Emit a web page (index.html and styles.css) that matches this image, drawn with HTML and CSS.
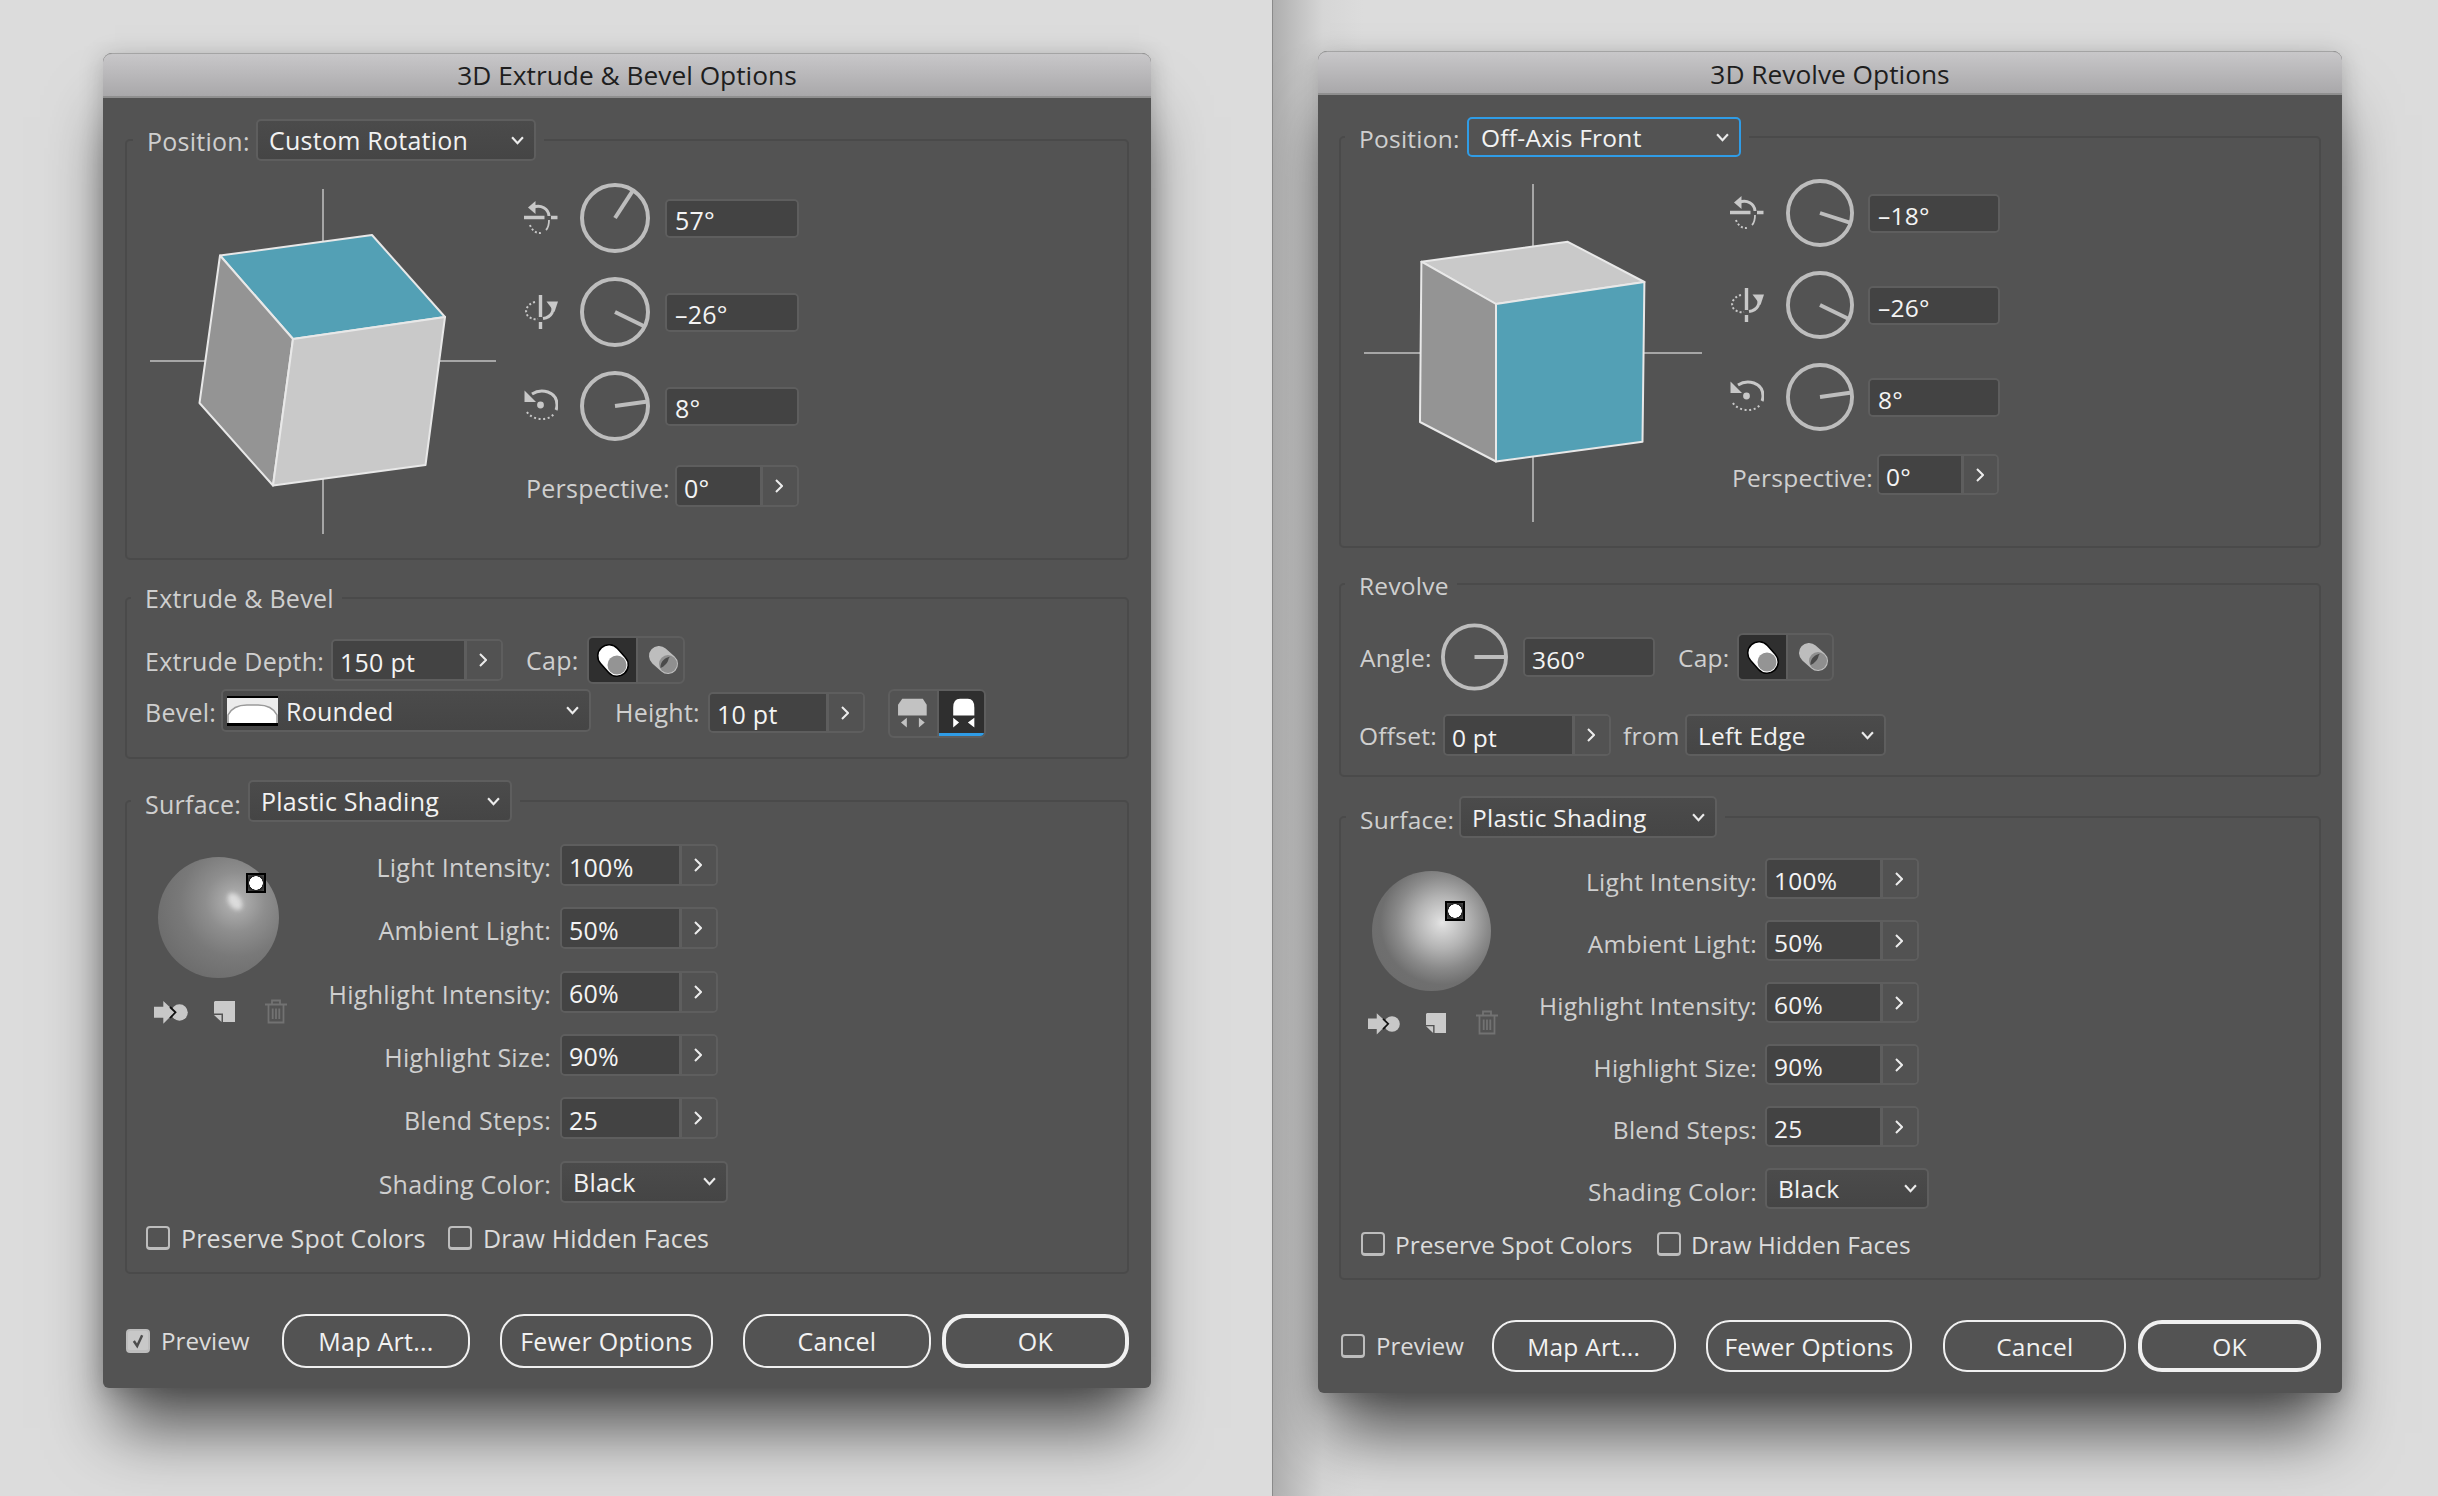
FILE: index.html
```html
<!DOCTYPE html>
<html lang="en">
<head>
<meta charset="utf-8">
<title>3D Options</title>
<link rel="stylesheet" href="styles.css">
</head>
<body>
<svg class="defs" aria-hidden="true">
  <symbol id="axis-x" viewBox="0 0 34 34">
    <path d="M0 16.500H20.500M27 16.500H33.500" fill="none" stroke="#c8c8c8" stroke-width="3.400"/>
    <path d="M9 6.500C17 3 24.500 8 25 15" fill="none" stroke="#c8c8c8" stroke-width="3"/>
    <path d="M4 6.500L11.500 0V13Z" fill="#c8c8c8"/>
    <path d="M25 19C25 24 24 27 22 29" fill="none" stroke="#c8c8c8" stroke-width="1.800"/>
    <path d="M6 24C8 30 14 34 19 31" fill="none" stroke="#c8c8c8" stroke-width="2" stroke-dasharray="2 2.200"/>
  </symbol>
  <symbol id="axis-y" viewBox="0 0 34 34">
    <path d="M16.500 0V22M16.500 27V34" fill="none" stroke="#c8c8c8" stroke-width="3.400"/>
    <path d="M27.500 9C31 15 28 22 19 23.500" fill="none" stroke="#c8c8c8" stroke-width="3"/>
    <path d="M22.500 6.500H34L30.500 17Z" fill="#c8c8c8"/>
    <path d="M11 7C3 9 -1 17 5 22C8 24 11 24.500 14 24" fill="none" stroke="#c8c8c8" stroke-width="2" stroke-dasharray="2 2.200"/>
  </symbol>
  <symbol id="axis-z" viewBox="0 0 34 34">
    <circle cx="16.500" cy="16" r="3.400" fill="#c8c8c8"/>
    <path d="M8 5C17 -1 33 2 33 16C33 18 32.500 20 32 21" fill="none" stroke="#c8c8c8" stroke-width="3"/>
    <path d="M0.500 1.500V13H12Z" fill="#c8c8c8"/>
    <path d="M3 23C8 31 23 33 30 25" fill="none" stroke="#c8c8c8" stroke-width="2" stroke-dasharray="2 2.600"/>
  </symbol>
  <symbol id="chev-right" viewBox="0 0 8 14">
    <path d="M1 1L7 7L1 13" fill="none" stroke="#ececec" stroke-width="2"/>
  </symbol>
  <symbol id="chev-down" viewBox="0 0 12 8">
    <path d="M1 1L6 6.500L11 1" fill="none" stroke="#ececec" stroke-width="2"/>
  </symbol>
  <symbol id="cap-on" viewBox="0 0 47 46">
    <path d="M20 18L28 27" stroke="#000" stroke-width="24" stroke-linecap="round"/>
    <path d="M20 18L28 27" stroke="#fff" stroke-width="21" stroke-linecap="round"/>
    <circle cx="28" cy="27" r="9.500" fill="#949494"/>
  </symbol>
  <symbol id="cap-off" viewBox="0 0 47 46">
    <path d="M21 18L30 26" stroke="#bdbdbd" stroke-width="20" stroke-linecap="round"/>
    <circle cx="30" cy="26" r="9" fill="#8f8f8f"/>
    <path d="M22.500 30C22 24 27 19 33 18.500C29 20 32 22 28 26C26 28 25 29 22.500 30Z" fill="#4a4a4a"/>
  </symbol>
  <symbol id="bevel-out" viewBox="0 0 47 47">
    <path d="M12 8H33L37 14V25H7.700V14Z" fill="#c2c2c2"/>
    <path d="M10.700 32.300L16.700 27.300V37.300ZM35 32.300L29 27.300V37.300Z" fill="#c2c2c2"/>
  </symbol>
  <symbol id="bevel-in" viewBox="0 0 47 47">
    <path d="M14 25V17Q14 8 21 8H29Q35.600 8 35.600 17V25Z" fill="#fff"/>
    <path d="M14 27.300V37.300L20 32.300ZM35.600 27.300V37.300L29 32.300Z" fill="#fff"/>
  </symbol>
  <symbol id="bevel-rounded" viewBox="0 0 51 30">
    <rect width="51" height="30" fill="#000"/>
    <rect y="2" width="51" height="26" fill="#ececec"/>
    <path d="M1 28V19Q6 9 20 9H31Q45 9 50 19V28Z" fill="#fff" stroke="#9a9a9a" stroke-width="1.500"/>
    <rect y="27" width="51" height="3" fill="#000"/>
  </symbol>
  <symbol id="ico-map" viewBox="0 0 34 23">
    <circle cx="25.500" cy="11.500" r="8.300" fill="#c8c8c8"/>
    <path d="M0 5.700H9.300V0L21 11L9.300 22.700V16.700H0Z" fill="#c8c8c8"/>
    <path d="M16 6L21.500 11.300L16 17" fill="none" stroke="#111" stroke-width="1.800"/>
  </symbol>
  <symbol id="ico-new" viewBox="0 0 21 21">
    <path d="M1 0H21V21H9V12.500H0V1Z" fill="#cacaca"/>
    <path d="M0 14H7.500V21Z" fill="#cacaca"/>
  </symbol>
  <symbol id="ico-trash" viewBox="0 0 22 25">
    <path d="M0 5.500H22M7 5V1.500H15V5M3.500 6V23.500H18.500V6M7.700 9.500V20M11 9.500V20M14.300 9.500V20" fill="none" stroke="#727272" stroke-width="1.800"/>
  </symbol>
  <symbol id="ico-check" viewBox="0 0 24 24">
    <path d="M7 12L11 18L17 5" fill="none" stroke="#4d4d4d" stroke-width="3"/>
  </symbol>
</svg>

<main class="desk">
  <div class="pane pane-left">
    <section class="dialog dialog-extrude">
      <header class="titlebar">3D Extrude &amp; Bevel Options</header>
      <div class="dialog-body">

        <div class="group pos-group">
          <div class="legend">
            <span class="label">Position:</span>
            <div class="select sel-pos"><span>Custom Rotation</span><svg class="chev"><use href="#chev-down"/></svg></div>
          </div>
          <div class="pos-body">
            <svg class="cube" viewBox="150 189 346 345">
              <path class="cross" d="M323 189V534M150 361H496"/>
              <polygon class="face-teal" points="220,255.500 372,235 445,317 293,339"/>
              <polygon class="face-mid" points="220,255.500 293,339 273,485.500 199.500,403"/>
              <polygon class="face-light" points="293,339 445,317 425.500,465 273,485.500"/>
            </svg>
            <div class="rotations">
              <div class="rot-row">
                <svg class="axis"><use href="#axis-x"/></svg>
                <svg class="dial" viewBox="0 0 70 70"><circle cx="35" cy="35" r="33"/><line x1="35" y1="35" x2="53" y2="7.300"/></svg>
                <div class="field f-rot"><span class="val">57°</span></div>
              </div>
              <div class="rot-row">
                <svg class="axis"><use href="#axis-y"/></svg>
                <svg class="dial" viewBox="0 0 70 70"><circle cx="35" cy="35" r="33"/><line x1="35" y1="35" x2="64.700" y2="49.500"/></svg>
                <div class="field f-rot"><span class="val">–26°</span></div>
              </div>
              <div class="rot-row">
                <svg class="axis"><use href="#axis-z"/></svg>
                <svg class="dial" viewBox="0 0 70 70"><circle cx="35" cy="35" r="33"/><line x1="35" y1="35" x2="67.700" y2="30.400"/></svg>
                <div class="field f-rot"><span class="val">8°</span></div>
              </div>
              <div class="persp-row">
                <span class="label">Perspective:</span>
                <div class="field f-persp"><span class="val">0°</span><span class="step"><svg class="chev-r"><use href="#chev-right"/></svg></span></div>
              </div>
            </div>
          </div>
        </div>

        <div class="group mid-group">
          <div class="legend legend-text"><span class="label">Extrude &amp; Bevel</span></div>
          <div class="row row-depth">
            <span class="label lab-depth">Extrude Depth:</span>
            <div class="field f-depth"><span class="val">150 pt</span><span class="step"><svg class="chev-r"><use href="#chev-right"/></svg></span></div>
            <span class="label cap-label">Cap:</span>
            <div class="toggle t-cap">
              <span class="cell on"><svg class="cell-ico"><use href="#cap-on"/></svg></span>
              <span class="cell"><svg class="cell-ico"><use href="#cap-off"/></svg></span>
            </div>
          </div>
          <div class="row row-bevel">
            <span class="label lab-bevel">Bevel:</span>
            <div class="select sel-bevel"><svg class="bevel-thumb"><use href="#bevel-rounded"/></svg><span>Rounded</span><svg class="chev"><use href="#chev-down"/></svg></div>
            <span class="label height-label">Height:</span>
            <div class="field f-height"><span class="val">10 pt</span><span class="step"><svg class="chev-r"><use href="#chev-right"/></svg></span></div>
            <div class="toggle t-bevel">
              <span class="cell"><svg class="cell-ico"><use href="#bevel-out"/></svg></span>
              <span class="cell on underlined"><svg class="cell-ico"><use href="#bevel-in"/></svg></span>
            </div>
          </div>
        </div>

        <div class="group surf-group">
          <div class="legend">
            <span class="label">Surface:</span>
            <div class="select sel-surf"><span>Plastic Shading</span><svg class="chev"><use href="#chev-down"/></svg></div>
          </div>
          <div class="surf-body">
            <div class="light-col">
              <div class="sphere"><span class="spot"></span><span class="handle"></span></div>
              <div class="light-tools">
                <svg class="ico-map"><use href="#ico-map"/></svg>
                <svg class="ico-new"><use href="#ico-new"/></svg>
                <svg class="ico-trash"><use href="#ico-trash"/></svg>
              </div>
            </div>
            <div class="surf-grid">
              <span class="label">Light Intensity:</span>
              <div class="field f-surf"><span class="val">100%</span><span class="step"><svg class="chev-r"><use href="#chev-right"/></svg></span></div>
              <span class="label">Ambient Light:</span>
              <div class="field f-surf"><span class="val">50%</span><span class="step"><svg class="chev-r"><use href="#chev-right"/></svg></span></div>
              <span class="label">Highlight Intensity:</span>
              <div class="field f-surf"><span class="val">60%</span><span class="step"><svg class="chev-r"><use href="#chev-right"/></svg></span></div>
              <span class="label">Highlight Size:</span>
              <div class="field f-surf"><span class="val">90%</span><span class="step"><svg class="chev-r"><use href="#chev-right"/></svg></span></div>
              <span class="label">Blend Steps:</span>
              <div class="field f-surf"><span class="val">25</span><span class="step"><svg class="chev-r"><use href="#chev-right"/></svg></span></div>
              <span class="label">Shading Color:</span>
              <div class="select sel-shade"><span>Black</span><svg class="chev"><use href="#chev-down"/></svg></div>
            </div>
          </div>
          <div class="checks">
            <span class="check"></span><span class="label lab-spot">Preserve Spot Colors</span>
            <span class="check second"></span><span class="label">Draw Hidden Faces</span>
          </div>
        </div>

        <footer class="footer">
          <div class="preview"><span class="check checked"><svg class="tick"><use href="#ico-check"/></svg></span><span class="label">Preview</span></div>
          <button class="btn b-map">Map Art...</button>
          <button class="btn b-fewer">Fewer Options</button>
          <button class="btn b-cancel">Cancel</button>
          <button class="btn b-ok">OK</button>
        </footer>
      </div>
    </section>
  </div>

  <div class="pane pane-right">
    <section class="dialog dialog-revolve">
      <header class="titlebar">3D Revolve Options</header>
      <div class="dialog-body">

        <div class="group pos-group">
          <div class="legend">
            <span class="label">Position:</span>
            <div class="select sel-pos focused"><span>Off-Axis Front</span><svg class="chev"><use href="#chev-down"/></svg></div>
          </div>
          <div class="pos-body">
            <svg class="cube" viewBox="1364 184 338 338">
              <path class="cross" d="M1533 184V522M1364 353H1702"/>
              <polygon class="face-light" points="1421.400,261.700 1567.800,241.800 1644.400,282 1496,304"/>
              <polygon class="face-mid" points="1421.400,261.700 1496,304 1496,461.500 1420,422"/>
              <polygon class="face-teal" points="1496,304 1644.400,282 1642.500,441.800 1496,461.500"/>
            </svg>
            <div class="rotations">
              <div class="rot-row">
                <svg class="axis"><use href="#axis-x"/></svg>
                <svg class="dial" viewBox="0 0 70 70"><circle cx="35" cy="35" r="33"/><line x1="35" y1="35" x2="66.400" y2="45.200"/></svg>
                <div class="field f-rot"><span class="val">–18°</span></div>
              </div>
              <div class="rot-row">
                <svg class="axis"><use href="#axis-y"/></svg>
                <svg class="dial" viewBox="0 0 70 70"><circle cx="35" cy="35" r="33"/><line x1="35" y1="35" x2="64.700" y2="49.500"/></svg>
                <div class="field f-rot"><span class="val">–26°</span></div>
              </div>
              <div class="rot-row">
                <svg class="axis"><use href="#axis-z"/></svg>
                <svg class="dial" viewBox="0 0 70 70"><circle cx="35" cy="35" r="33"/><line x1="35" y1="35" x2="67.700" y2="30.400"/></svg>
                <div class="field f-rot"><span class="val">8°</span></div>
              </div>
              <div class="persp-row">
                <span class="label">Perspective:</span>
                <div class="field f-persp"><span class="val">0°</span><span class="step"><svg class="chev-r"><use href="#chev-right"/></svg></span></div>
              </div>
            </div>
          </div>
        </div>

        <div class="group mid-group">
          <div class="legend legend-text"><span class="label">Revolve</span></div>
          <div class="row row-angle">
            <span class="label lab-angle">Angle:</span>
            <svg class="dial" viewBox="0 0 70 70"><circle cx="35" cy="35" r="33"/><line x1="35" y1="35" x2="68" y2="35"/></svg>
            <div class="field f-angle"><span class="val">360°</span></div>
            <span class="label cap-label">Cap:</span>
            <div class="toggle t-cap">
              <span class="cell on"><svg class="cell-ico"><use href="#cap-on"/></svg></span>
              <span class="cell"><svg class="cell-ico"><use href="#cap-off"/></svg></span>
            </div>
          </div>
          <div class="row row-offset">
            <span class="label lab-offset">Offset:</span>
            <div class="field f-offset"><span class="val">0 pt</span><span class="step"><svg class="chev-r"><use href="#chev-right"/></svg></span></div>
            <span class="label from-label">from</span>
            <div class="select sel-from"><span>Left Edge</span><svg class="chev"><use href="#chev-down"/></svg></div>
          </div>
        </div>

        <div class="group surf-group">
          <div class="legend">
            <span class="label">Surface:</span>
            <div class="select sel-surf"><span>Plastic Shading</span><svg class="chev"><use href="#chev-down"/></svg></div>
          </div>
          <div class="surf-body">
            <div class="light-col">
              <div class="sphere"><span class="handle"></span></div>
              <div class="light-tools">
                <svg class="ico-map"><use href="#ico-map"/></svg>
                <svg class="ico-new"><use href="#ico-new"/></svg>
                <svg class="ico-trash"><use href="#ico-trash"/></svg>
              </div>
            </div>
            <div class="surf-grid">
              <span class="label">Light Intensity:</span>
              <div class="field f-surf"><span class="val">100%</span><span class="step"><svg class="chev-r"><use href="#chev-right"/></svg></span></div>
              <span class="label">Ambient Light:</span>
              <div class="field f-surf"><span class="val">50%</span><span class="step"><svg class="chev-r"><use href="#chev-right"/></svg></span></div>
              <span class="label">Highlight Intensity:</span>
              <div class="field f-surf"><span class="val">60%</span><span class="step"><svg class="chev-r"><use href="#chev-right"/></svg></span></div>
              <span class="label">Highlight Size:</span>
              <div class="field f-surf"><span class="val">90%</span><span class="step"><svg class="chev-r"><use href="#chev-right"/></svg></span></div>
              <span class="label">Blend Steps:</span>
              <div class="field f-surf"><span class="val">25</span><span class="step"><svg class="chev-r"><use href="#chev-right"/></svg></span></div>
              <span class="label">Shading Color:</span>
              <div class="select sel-shade"><span>Black</span><svg class="chev"><use href="#chev-down"/></svg></div>
            </div>
          </div>
          <div class="checks">
            <span class="check"></span><span class="label lab-spot">Preserve Spot Colors</span>
            <span class="check second"></span><span class="label">Draw Hidden Faces</span>
          </div>
        </div>

        <footer class="footer">
          <div class="preview"><span class="check"></span><span class="label">Preview</span></div>
          <button class="btn b-map">Map Art...</button>
          <button class="btn b-fewer">Fewer Options</button>
          <button class="btn b-cancel">Cancel</button>
          <button class="btn b-ok">OK</button>
        </footer>
      </div>
    </section>
  </div>
</main>
</body>
</html>
```
FILE: styles.css
```css
* { box-sizing: border-box; }
html, body { margin: 0; height: 100%; }
body { background: #dcdcdc; font-family: "Open Sans", "Noto Sans", sans-serif; overflow: hidden; }
.defs { position: absolute; width: 0; height: 0; }
svg { display: block; flex: none; }

.desk { display: flex; width: 2438px; height: 1496px; }
.pane { position: relative; overflow: hidden; height: 100%; background: #dcdcdc; }
.pane-left { width: 1272px; }
.pane-right { width: 1166px; border-left: 1px solid #8a8a8a; background: linear-gradient(90deg, #aeaeae, #d6d6d6 50px, #dcdcdc 90px); }

.dialog { position: absolute; background: #535353; border-radius: 9px 9px 6px 6px; box-shadow: 0 52px 62px -12px rgba(0,0,0,.62), 0 4px 24px rgba(0,0,0,.22); }
.dialog-extrude { left: 103px; top: 53px; width: 1048px; --fs: 25px; }
.dialog-revolve { left: 45px; top: 51px; width: 1024px; --fs: 24.500px; }

.titlebar { height: 45px; display: flex; align-items: center; justify-content: center; border-radius: 9px 9px 0 0; border-top: 1px solid #a4a4a4; border-bottom: 2px solid #8f8f8f; background: linear-gradient(#c8c7c9, #a9a8aa); color: #1e1e1e; font-size: 26.300px; }
.dialog-revolve .titlebar { height: 44px; padding-top: 2px; }
.dialog-body { padding: 0 22px 20px; font-size: var(--fs); letter-spacing: .25px; }
.dialog-revolve .dialog-body { padding: 0 21px 21px; }

.group { border: 2px solid #4a4a4a; border-radius: 5px; }
.label { color: #cfcfcf; white-space: nowrap; }
.legend { display: flex; align-items: center; width: fit-content; background: #535353; height: 42px; margin: -22px 0 0 4px; padding: 0 8px 0 14px; }
.legend-text { height: 30px; padding-bottom: 2px; }
.pos-group .legend { margin-left: 6px; }
.pos-group .legend .label { width: 100px; padding-top: 2px; }
.surf-group .legend .label { width: 93px; padding-top: 5px; }

.select { display: flex; align-items: center; justify-content: space-between; height: 42px; padding: 0 10px 0 11px; border: 2px solid #5e5e5e; border-radius: 5px; background: linear-gradient(#4b4b4b, #454545); color: #f2f2f2; white-space: nowrap; }
.select.focused { border-color: #2f9ce6; background: #535353; }
.chev { width: 13px; height: 9px; }
.field { display: flex; height: 42px; border: 2px solid #5e5e5e; border-radius: 5px; overflow: hidden; color: #f4f4f4; white-space: nowrap; }
.val { flex: 1; display: flex; align-items: center; padding: 3px 0 0 7px; background: #434343; }
.f-rot .val { padding-left: 8px; }
.step { flex: none; width: 37px; display: flex; align-items: center; justify-content: center; padding-right: 2px; border-left: 3px solid #5e5e5e; background: #525252; }
.chev-r { width: 8px; height: 14px; }

/* position group */
.pos-group { height: 421px; margin-top: 41px; }
.pos-body { display: flex; align-items: flex-start; }
.cube { width: 346px; height: 345px; margin: 28px 28px 0 23px; }
.cross { stroke: #a6a6a6; stroke-width: 2; fill: none; }
.cube polygon { stroke: #e8e8e8; stroke-width: 2; stroke-linejoin: round; }
.face-teal { fill: #53a0b5; }
.face-mid { fill: #949494; }
.face-light { fill: #c9c9c9; }
.rotations { display: flex; flex-direction: column; gap: 24px; margin-top: 22px; }
.rot-row { display: flex; align-items: center; }
.axis { width: 34px; height: 34px; margin-right: 22px; }
.dial { width: 70px; height: 70px; }
.dial circle { fill: none; stroke: #bdbdbd; stroke-width: 4; }
.dial line { stroke: #bdbdbd; stroke-width: 4; }
.f-rot { width: 134px; height: 39px; margin-left: 15px; }
.persp-row { display: flex; align-items: center; gap: 9px; margin-left: 2px; }
.persp-row .label { width: 140px; padding-top: 3px; }
.f-persp { width: 124px; }
.sel-pos { width: 280px; margin-left: 9px; }

/* middle group */
.mid-group { height: 162px; margin-top: 37px; }
.mid-group .legend { margin-top: -15px; }
.row { display: flex; align-items: center; padding-left: 18px; }
.row-depth { height: 48px; margin-top: 22px; }
.lab-depth { width: 177px; padding-top: 2px; }
.f-depth { width: 172px; margin-left: 9px; }
.cap-label { width: 52px; margin-left: 23px; }
.toggle { display: flex; border: 2px solid #5e5e5e; border-radius: 6px; overflow: hidden; }
.cell { flex: 1; display: block; position: relative; }
.cell.on { background: #2f2f2f; }
.cell + .cell { border-left: 2px solid #5e5e5e; }
.cell-ico { width: 47px; height: 46px; }
.t-cap { width: 98px; height: 48px; margin-left: 9px; }
.row-bevel { height: 49px; margin-top: 5px; align-items: flex-start; }
.row-bevel .label { line-height: 46px; }
.lab-bevel { width: 68px; }
.sel-bevel { width: 370px; height: 43px; margin-left: 8px; padding-left: 4px; }
.sel-bevel span { flex: 1; padding-left: 8px; }
.bevel-thumb { width: 51px; height: 30px; }
.height-label { width: 85px; margin-left: 24px; }
.f-height { width: 157px; height: 41px; margin: 3px 0 0 8px; }
.t-bevel { width: 98px; height: 49px; margin-left: 23px; }
.underlined::after { content: ""; position: absolute; left: 0; right: 2px; bottom: 0; height: 3px; background: #2f9ce6; }

/* surface group */
.surf-group { height: 474px; margin-top: 41px; }
.sel-surf { width: 264px; margin-left: 10px; }
.surf-body { display: flex; align-items: flex-start; }
.light-col { width: 133px; margin: 35px 33px 0 27px; }
.sphere { position: relative; width: 121px; height: 121px; margin-left: 4px; border-radius: 50%; background: radial-gradient(circle at 64% 37%, #b4b4b4 0, #a6a6a6 12px, #8e8e8e 30px, #797979 55px, #6c6c6c 85px, #686868 100%); }
.spot { position: absolute; left: 71px; top: 35px; width: 12px; height: 19px; border-radius: 50%; background: #dcdcdc; filter: blur(2px); transform: rotate(-35deg); }
.handle { position: absolute; left: 88px; top: 16px; width: 20px; height: 20px; border: 2px solid #000; background: radial-gradient(circle, #fff 0, #fff 6.500px, #222 7px, #555 100%); }
.light-tools { display: flex; align-items: flex-end; margin-top: 21px; }
.ico-map { width: 34px; height: 23px; }
.ico-new { width: 21px; height: 21px; margin: 0 30px 2px 26px; }
.ico-trash { width: 22px; height: 25px; }
.surf-grid { display: grid; grid-template-columns: 231px auto; column-gap: 9px; row-gap: 21.330px; margin-top: 22px; align-items: center; justify-items: start; }
.surf-grid .label { justify-self: end; padding-top: 4px; }
.f-surf { width: 158px; }
.sel-shade { width: 168px; }
.checks { display: flex; align-items: center; height: 24px; margin: 23px 0 0 19px; letter-spacing: .12px; }
.checks .label, .preview .label { color: #dcdcdc; }
.lab-spot { width: 242px; }
.check { flex: none; display: block; width: 24px; height: 24px; margin-right: 11px; border: 2px solid #bdbdbd; border-bottom-width: 3px; border-radius: 4px; }
.check.second { margin-left: 25px; }
.check.checked { background: #c8c8c8; }
.tick { width: 20px; height: 20px; }

/* footer */
.footer { display: flex; align-items: center; margin-top: 40px; }
.preview { display: flex; align-items: center; width: 157px; padding-left: 1px; font-size: 24.200px; letter-spacing: 0; }
.preview .label { margin-top: -2px; }
.btn { height: 54px; margin: 0 0 0 30px; padding: 0; border: 2px solid #f0f0f0; border-radius: 24px; background: none; color: #f2f2f2; font: inherit; letter-spacing: inherit; }
.preview + .btn { margin-left: 0; }
.b-map { width: 188px; }
.b-fewer { width: 213px; }
.b-cancel { width: 188px; }
.b-ok { width: 187px; margin-left: 11px; border-width: 4px; }

/* revolve dialog */
.dialog-revolve .pos-group { height: 412px; margin-top: 41px; }
.dialog-revolve .pos-group .legend { height: 40px; margin: -21px 0 0 4px; }
.dialog-revolve .sel-pos { width: 274px; height: 40px; margin-left: 8px; padding-left: 12px; }
.dialog-revolve .cube { width: 338px; height: 338px; margin: 27px 28px 0 23px; }
.dialog-revolve .rotations { gap: 24px; margin-top: 22px; }
.dialog-revolve .rot-row .dial { width: 68px; height: 68px; }
.dialog-revolve .f-rot { width: 132px; margin-left: 14px; }
.dialog-revolve .val { padding-top: 4px; }
.dialog-revolve .persp-row { gap: 9px; margin-top: -1px; }
.dialog-revolve .persp-row .label { width: 136px; padding-top: 5px; }
.dialog-revolve .f-persp { width: 122px; height: 41px; }
.dialog-revolve .f-persp .step { width: 36px; }
.dialog-revolve .mid-group { height: 194px; margin-top: 35px; }
.dialog-revolve .mid-group .legend { margin-top: -14px; }
.row-angle { height: 68px; margin-top: 22px; padding-left: 19px; }
.lab-angle { width: 72px; }
.row-angle .dial { width: 67px; height: 68px; margin-left: 9px; }
.f-angle { width: 132px; height: 40px; margin-left: 15px; }
.dialog-revolve .cap-label { width: 50px; }
.dialog-revolve .t-cap { width: 97px; }
.row-offset { height: 42px; margin-top: 23px; }
.lab-offset { width: 75px; }
.f-offset { width: 168px; margin-left: 9px; }
.from-label { width: 54px; margin-left: 12px; }
.sel-from { width: 201px; margin-left: 8px; }
.dialog-revolve .surf-group { height: 464px; margin-top: 39px; }
.dialog-revolve .surf-group .legend { margin-left: 5px; }
.dialog-revolve .surf-group .legend .label { width: 90px; }
.dialog-revolve .sel-surf { width: 258px; margin-left: 9px; }
.dialog-revolve .light-col { width: 130px; margin: 33px 32px 0 27px; }
.dialog-revolve .sphere { width: 119px; height: 120px; background: radial-gradient(circle at 59% 43%, #e6e6e6 0, #d8d8d8 6px, #b4b4b4 26px, #8a8a8a 46px, #6f6f6f 62px, #6a6a6a 100%); }
.dialog-revolve .handle { left: 73px; top: 30px; }
.dialog-revolve .light-tools { margin-top: 19px; }
.dialog-revolve .ico-map { width: 32px; height: 22px; }
.dialog-revolve .ico-new { width: 20px; height: 20px; margin: 0 30px 2px 26px; }
.dialog-revolve .surf-grid { grid-template-columns: 227px auto; column-gap: 8px; row-gap: 21px; margin-top: 20px; }
.dialog-revolve .surf-grid .label { padding-top: 6px; }
.dialog-revolve .surf-grid .field, .dialog-revolve .surf-grid .select { height: 41px; }
.dialog-revolve .f-surf { width: 154px; }
.dialog-revolve .sel-shade { width: 164px; }
.dialog-revolve .checks { margin-left: 20px; letter-spacing: 0; }
.dialog-revolve .checks .check { margin-right: 10px; }
.dialog-revolve .lab-spot { width: 237px; }
.dialog-revolve .footer { margin-top: 40px; }
.dialog-revolve .preview { width: 153px; padding-left: 2px; font-size: 24px; }
.dialog-revolve .btn { height: 52px; }
.dialog-revolve .b-map { width: 184px; }
.dialog-revolve .b-fewer { width: 207px; }
.dialog-revolve .b-cancel { width: 183px; margin-left: 31px; }
.dialog-revolve .b-ok { width: 183px; margin-left: 12px; }
```
